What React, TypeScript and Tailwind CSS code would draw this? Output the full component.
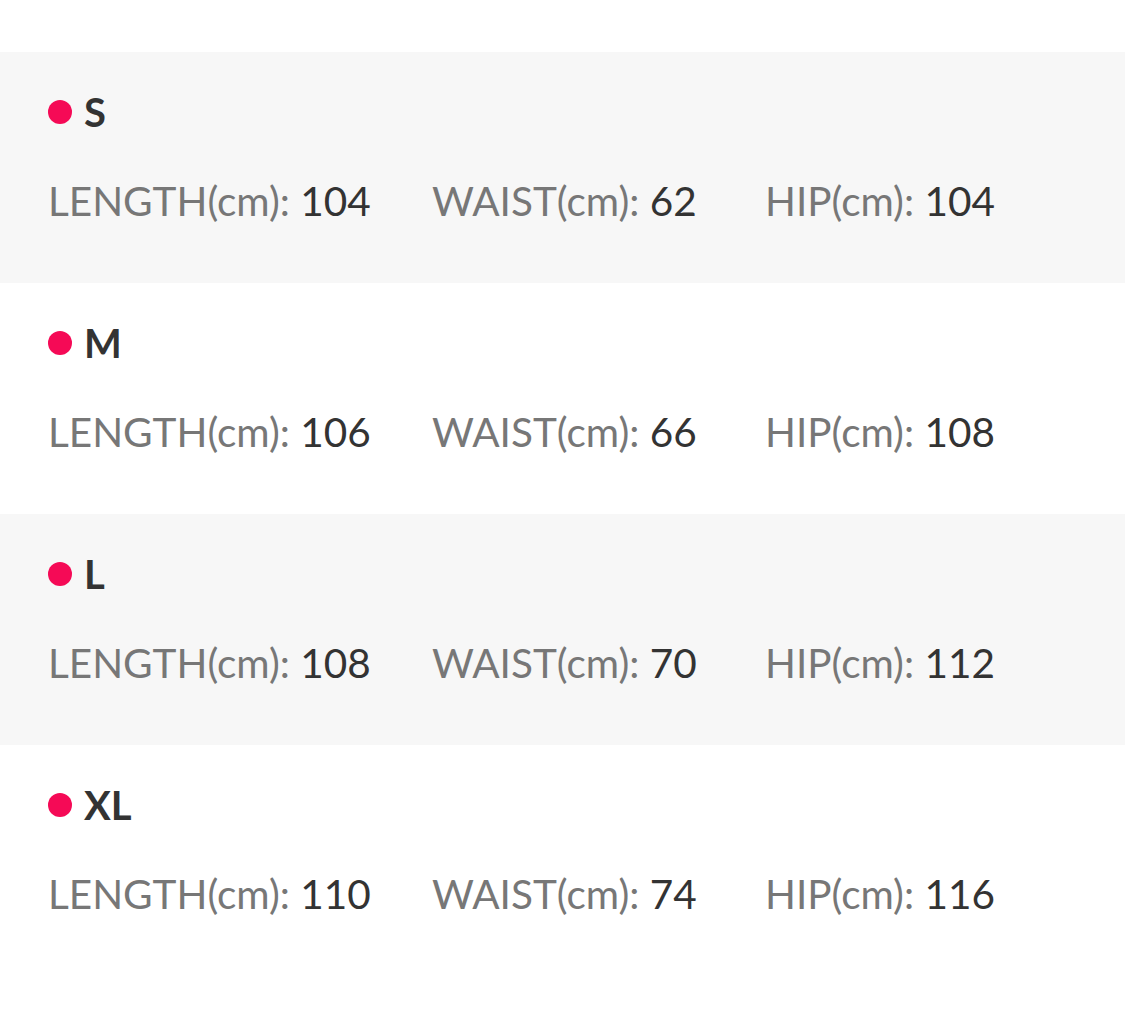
export default function App() {
  const rows = [
    { s: "S", l: 104, w: 62, h: 104 },
    { s: "M", l: 106, w: 66, h: 108 },
    { s: "L", l: 108, w: 70, h: 112 },
    { s: "XL", l: 110, w: 74, h: 116 },
  ];
  return (
    <div className="w-[1125px] h-[1023px] bg-white pt-[52px]" style={{ fontFamily: "Lato, 'Noto Sans', sans-serif" }}>
      {rows.map((r, i) => (
        <div key={r.s} className={`h-[231px] px-12 pt-[36px] ${i % 2 === 0 ? "bg-[#f7f7f7]" : "bg-white"}`}>
          <div className="flex items-center h-[48px]">
            <span className="w-6 h-6 rounded-full bg-[#f50a56] mr-3" />
            <span className="text-[40px] font-bold text-[#333333] leading-[48px]">{r.s}</span>
          </div>
          <div className="flex items-center h-[48px] mt-[41px] text-[40.5px] leading-[48px]">
            <span className="w-[384px] shrink-0"><span className="text-[#777777]">LENGTH(cm):</span> <span className="text-[#333333]">{r.l}</span></span>
            <span className="w-[333px] shrink-0"><span className="text-[#777777]">WAIST(cm):</span> <span className="text-[#333333]">{r.w}</span></span>
            <span><span className="text-[#777777]">HIP(cm):</span> <span className="text-[#333333]">{r.h}</span></span>
          </div>
        </div>
      ))}
    </div>
  );
}
